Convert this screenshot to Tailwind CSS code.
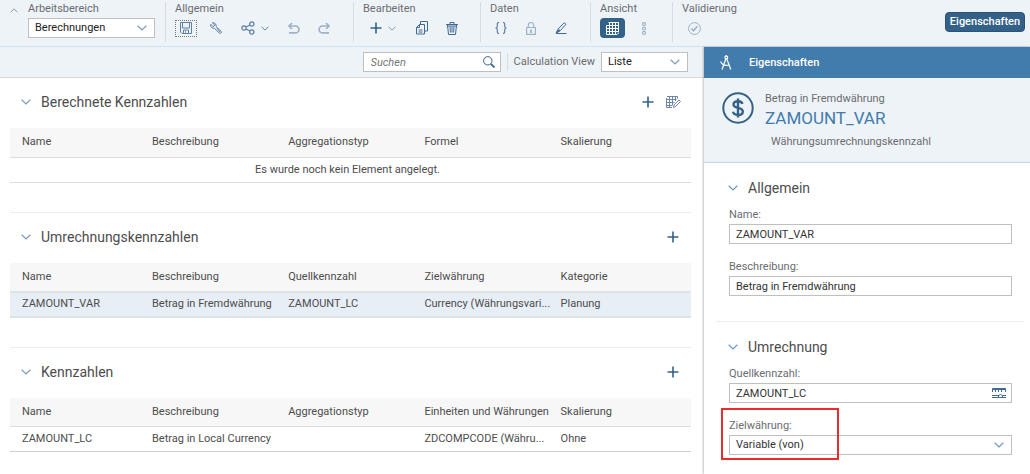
<!DOCTYPE html>
<html lang="de">
<head>
    <meta charset="UTF-8">
    <meta name="viewport" content="width=device-width, initial-scale=1.0">
    <title>Calculation View - Eigenschaften</title>
    <script src="https://cdn.jsdelivr.net/npm/@tailwindcss/browser@4"></script>
</head>
<body class="min-h-screen flex flex-col bg-white font-['Roboto',sans-serif] text-[11px] leading-4 text-[#4d4d4d]">

    <!-- Icons -->
    <svg class="hidden">
        <symbol id="chevron" viewBox="0 0 10 6"><path d="M.7.8 5 5 9.3.8" fill="none" stroke="currentColor" stroke-width="1.2"/></symbol>
        <symbol id="plus" viewBox="0 0 12 12"><path d="M6 .5v11M.5 6h11" fill="none" stroke="currentColor" stroke-width="1.6"/></symbol>
    </svg>

    <!-- Werkzeugleiste -->
    <header class="flex h-[47px] bg-[#eef3f8] border-b border-[#cfe0ee] text-[#6a6d70]">
        <button class="w-7 h-5 flex items-center justify-center text-[#7f9bb5]" aria-label="Einklappen">
            <svg class="w-2 h-[5px] rotate-180"><use href="#chevron"/></svg>
        </button>

        <div class="mt-0.5 h-10 pr-[10px] border-r border-[#d5dce2]">
            <label for="workspace" class="block h-4 leading-[14px]">Arbeitsbereich</label>
            <div class="relative">
                <select id="workspace" class="appearance-none block w-[127px] h-5 pl-1.5 bg-white border border-[#bfbfbf] text-[#222]">
                    <option>Berechnungen</option>
                </select>
                <svg class="absolute right-2 top-[7px] w-[10px] h-1.5 text-[#7f9bb5] pointer-events-none"><use href="#chevron"/></svg>
            </div>
        </div>

        <div class="mt-0.5 h-10 pl-[9px] pr-[18px] border-r border-[#d5dce2]">
            <div class="h-4 leading-[14px]">Allgemein</div>
            <div class="flex items-center gap-2 h-5 text-[#5f7fa3]">
                <button class="w-[22px] h-[17px] flex items-center justify-center border border-dotted border-[#777]" aria-label="Sichern">
                    <svg class="w-3 h-3" viewBox="0 0 12 12" fill="none" stroke="currentColor"><path d="M.5.5h11v11H2L.5 10zM2.5.5v5.5h7V.5M3.500 11.500V8h5v3.500M5.500 9.200v1.500"/></svg>
                </button>
                <button class="w-[22px] h-5 flex items-center justify-center" aria-label="Einstellungen">
                    <svg class="w-3 h-3" viewBox="0 0 12 12" fill="none" stroke="currentColor"><path d="M2.300.8 4.800 3 3.300 4.800.8 2.300C.2 4 1 5.800 3 6.200c.6.100 1 0 1.300-.1l5 5c1.300.9 2.600-.5 1.800-1.700L6 4.400c.5-1.900-.6-3.900-3.700-3.600zM6.800 6l3.300 4"/></svg>
                </button>
                <button class="w-10 h-5 flex items-center justify-center gap-1.5" aria-label="Teilen">
                    <svg class="w-[14px] h-[14px]" viewBox="0 0 14 14" fill="none" stroke="currentColor" stroke-width="1.200"><circle cx="3" cy="7" r="2.100"/><circle cx="10.800" cy="3" r="2.100"/><circle cx="10.800" cy="11" r="2.100"/><path d="m5 6 4-2M5 8l4 2"/></svg>
                    <svg class="w-2 h-[5px]"><use href="#chevron"/></svg>
                </button>
                <button class="w-[22px] h-5 flex items-center justify-center text-[#9db3c8]" aria-label="Rückgängig">
                    <svg class="w-3 h-3" viewBox="0 0 12 12" fill="none" stroke="currentColor" stroke-width="1.700"><path d="M4 1 1 4l3 3M1 4h6.500a3.300 3.300 0 0 1 0 6.800H1"/></svg>
                </button>
                <button class="w-[22px] h-5 flex items-center justify-center text-[#9db3c8]" aria-label="Wiederholen">
                    <svg class="w-3 h-3" viewBox="0 0 12 12" fill="none" stroke="currentColor" stroke-width="1.700"><path d="m8 1 3 3-3 3M11 4H4.500a3.300 3.300 0 0 0 0 6.800H11"/></svg>
                </button>
            </div>
        </div>

        <div class="mt-0.5 h-10 pl-[9px] pr-[17px] border-r border-[#d5dce2]">
            <div class="h-4 leading-[14px]">Bearbeiten</div>
            <div class="flex items-center gap-2 h-5 text-[#426b93]">
                <button class="w-10 h-5 flex items-center justify-center gap-1.5" aria-label="Hinzufügen">
                    <svg class="w-3 h-3 text-[#346187]"><use href="#plus"/></svg>
                    <svg class="w-2 h-[5px] text-[#7f9bb5]"><use href="#chevron"/></svg>
                </button>
                <button class="w-[22px] h-5 flex items-center justify-center" aria-label="Kopieren">
                    <svg class="w-3 h-[14px]" viewBox="0 0 12 14" fill="none" stroke="currentColor"><path d="M4.500 3.500V.5h7v9.500H9M.5 6.500l3-3H8.500v9.500h-8zM.5 6.500h3v-3M2.500 9h4M2.500 11h4"/></svg>
                </button>
                <button class="w-[22px] h-5 flex items-center justify-center" aria-label="Löschen">
                    <svg class="w-3 h-[13px]" viewBox="0 0 12 13" fill="none" stroke="currentColor"><path d="M0 2.500h12M4 2.500v-2h4v2M1.500 3l1 9.500h7l1-9.500M4 4.500l.4 6M6 4.500v6M8 4.500l-.4 6M1 4h10"/></svg>
                </button>
            </div>
        </div>

        <div class="mt-0.5 h-10 pl-[9px] pr-[18px] border-r border-[#d5dce2]">
            <div class="h-4 leading-[14px]">Daten</div>
            <div class="flex items-center gap-2 h-5 text-[#5f7fa3]">
                <button class="w-[22px] h-5 flex items-center justify-center" aria-label="Skript">
                    <svg class="w-3 h-3" viewBox="0 0 12 12" fill="none" stroke="currentColor" stroke-width="1.200"><path d="M4 .5C2.500.5 2.300 1 2.300 2.200v2C2.300 5.400 1.800 6 .5 6c1.300 0 1.800.6 1.800 1.800v2c0 1.200.2 1.700 1.700 1.700M8 .5c1.500 0 1.700.5 1.700 1.700v2c0 1.200.5 1.800 1.800 1.800-1.300 0-1.800.6-1.800 1.800v2c0 1.200-.2 1.700-1.700 1.700"/></svg>
                </button>
                <button class="w-[22px] h-5 flex items-center justify-center text-[#9db3c8]" aria-label="Sperren">
                    <svg class="w-[10px] h-[13px]" viewBox="0 0 10 13" fill="none" stroke="currentColor" stroke-width="1.200"><path d="M.6 5.500h8.800v6.900H.6zM2.300 5.500V3.200a2.700 2.700 0 0 1 5.400 0v2.300"/><path d="M5 7.500v3.500" stroke-width="1.800"/></svg>
                </button>
                <button class="w-[22px] h-5 flex items-center justify-center text-[#426b93]" aria-label="Bearbeiten">
                    <svg class="w-3 h-3" viewBox="0 0 12 12" fill="none" stroke="currentColor"><path d="m3.300 6.800 5.900-6L11 2.300 5.200 8.700zM3.200 7 1 11.200l4-2.400M1 11.500h10.500"/><path d="m1.500 10.500 2-2.500 1 1z" fill="currentColor"/></svg>
                </button>
            </div>
        </div>

        <div class="mt-0.5 h-10 pl-[9px] pr-[17px] border-r border-[#d5dce2]">
            <div class="h-4 leading-[14px]">Ansicht</div>
            <div class="flex items-center gap-2 h-5 text-[#9db3c8]">
                <button class="w-[25px] h-5 flex items-center justify-center rounded-sm bg-[#346187] text-white" aria-label="Listenansicht">
                    <svg class="w-[13px] h-[13px]" viewBox="0 0 13 13" fill="none" stroke="currentColor"><path d="M2.500.5h10v9M3.500.5v12M6.500.5v12M9.500.5v12M12.500.5v10M.5 3.500h12M.5 6.500h12M.5 9.500h12M.5 3.500v9h10.500l1.500-1.500"/></svg>
                </button>
                <button class="w-[22px] h-5 flex items-center justify-center" aria-label="Hierarchie">
                    <svg class="w-[6px] h-[13px]" viewBox="0 0 6 13" fill="none" stroke="currentColor" stroke-width="1.200"><circle cx="3" cy="2.100" r="1.500"/><circle cx="3" cy="6.500" r="1.500"/><circle cx="3" cy="10.900" r="1.500"/></svg>
                </button>
            </div>
        </div>

        <div class="mt-0.5 h-10 pl-[9px]">
            <div class="h-4 leading-[14px]">Validierung</div>
            <button class="w-6 h-5 flex items-center justify-center text-[#9db3c8]" aria-label="Validieren">
                <svg class="w-[13px] h-[13px]" viewBox="0 0 13 13" fill="none" stroke="currentColor"><circle cx="6.500" cy="6.500" r="5.900"/><path d="m3.500 6.700 2 2 3.800-4.400" stroke-width="1.700"/></svg>
            </button>
        </div>

        <button class="ml-auto mr-[5px] mt-3 w-20 h-5 rounded-sm bg-[#346187] border border-[#2b5277] text-white font-medium">Eigenschaften</button>
    </header>

    <div class="flex flex-1">

        <!-- Linker Bereich: Listen -->
        <main class="flex-1 min-w-0">
            <div class="flex items-center justify-end h-[31px] pr-4 bg-[#eef3f8] border-b border-[#d9d9d9] text-[#6a6d70]">
                <div class="relative">
                    <input type="search" placeholder="Suchen" aria-label="Suchen" class="block w-[138px] h-5 px-[7px] bg-white border border-[#bfbfbf] placeholder:italic placeholder:text-[#74777a]">
                    <svg class="absolute right-1.5 top-1 w-3 h-3 text-[#346187]" viewBox="0 0 12 12" fill="none" stroke="currentColor"><circle cx="4.800" cy="4.800" r="4.200"/><path d="m7.800 7.800 3.700 3.700" stroke-width="1.700"/></svg>
                </div>
                <div class="mx-1.5 h-[18px] border-l border-[#d5dce2]"></div>
                <label for="view" class="mr-1.5 leading-[18px]">Calculation View</label>
                <div class="relative">
                    <select id="view" class="appearance-none block w-[87px] h-5 pl-1.5 bg-white border border-[#bfbfbf] text-[#222]">
                        <option>Liste</option>
                    </select>
                    <svg class="absolute right-2 top-[7px] w-[10px] h-1.5 text-[#7f9bb5] pointer-events-none"><use href="#chevron"/></svg>
                </div>
            </div>

            <div class="pl-[10px] pr-[13px]">
                <!-- Berechnete Kennzahlen -->
                <section class="pb-[29px]">
                    <div class="flex items-center h-[50px] pl-[11px] pr-3 pb-0.5">
                        <svg class="w-[10px] h-1.5 text-[#7f9bb5]"><use href="#chevron"/></svg>
                        <h2 class="ml-[10px] text-[14px] leading-5">Berechnete Kennzahlen</h2>
                        <button class="ml-auto text-[#346187]" aria-label="Kennzahl anlegen"><svg class="w-3 h-3"><use href="#plus"/></svg></button>
                        <button class="ml-3 -mr-0.5 text-[#6f87a6]" aria-label="Tabelle bearbeiten">
                            <svg class="w-[15px] h-3" viewBox="0 0 15 12" fill="none" stroke="currentColor"><path d="M.5 2v9.500h5.500M.5 3.500h10M3.500 0v11.500M6.500 0v9M9.500 0v5M1 .5h10.500v2M.5 6.500h8M.5 9.500h6"/><path d="m7.500 11.500.5-2.500 5-5 1.500 1.500-5 5z"/></svg>
                        </button>
                    </div>
                    <table class="w-full table-fixed text-left">
                        <thead>
                            <tr class="h-[29px] bg-[#f7f7f7] border-b border-[#dcdcdc]">
                                <th class="w-[130px] pl-3 font-normal">Name</th>
                                <th class="w-[20%] pl-3 font-normal">Beschreibung</th>
                                <th class="w-[20%] pl-3 font-normal">Aggregationstyp</th>
                                <th class="w-[20%] pl-3 font-normal">Formel</th>
                                <th class="pl-3 font-normal">Skalierung</th>
                            </tr>
                        </thead>
                        <tbody>
                            <tr class="h-[25px] border-b border-[#dcdcdc]">
                                <td colspan="5" class="pr-1.5 text-center">Es wurde noch kein Element angelegt.</td>
                            </tr>
                        </tbody>
                    </table>
                </section>

                <!-- Umrechnungskennzahlen -->
                <section class="pb-[29px] border-t border-[#eeeeee]">
                    <div class="flex items-center h-[50px] pl-[11px] pr-3 pb-0.5">
                        <svg class="w-[10px] h-1.5 text-[#7f9bb5]"><use href="#chevron"/></svg>
                        <h2 class="ml-[10px] text-[14px] leading-5">Umrechnungskennzahlen</h2>
                        <button class="ml-auto text-[#346187]" aria-label="Umrechnungskennzahl anlegen"><svg class="w-3 h-3"><use href="#plus"/></svg></button>
                    </div>
                    <table class="w-full table-fixed text-left">
                        <thead>
                            <tr class="h-[29px] bg-[#f7f7f7] border-b-2 border-[#e0e4e7]">
                                <th class="w-[130px] pl-3 font-normal">Name</th>
                                <th class="w-[20%] pl-3 font-normal">Beschreibung</th>
                                <th class="w-[20%] pl-3 font-normal">Quellkennzahl</th>
                                <th class="w-[20%] pl-3 font-normal">Zielwährung</th>
                                <th class="pl-3 font-normal">Kategorie</th>
                            </tr>
                        </thead>
                        <tbody>
                            <tr class="h-[25px] bg-[#e7eef6] border-b-2 border-[#dde2e6]">
                                <td class="pl-3 whitespace-nowrap">ZAMOUNT_VAR</td>
                                <td class="pl-3 whitespace-nowrap">Betrag in Fremdwährung</td>
                                <td class="pl-3 whitespace-nowrap">ZAMOUNT_LC</td>
                                <td class="pl-3 whitespace-nowrap">Currency (Währungsvari...</td>
                                <td class="pl-3 whitespace-nowrap">Planung</td>
                            </tr>
                        </tbody>
                    </table>
                </section>

                <!-- Kennzahlen -->
                <section class="border-t border-[#eeeeee]">
                    <div class="flex items-center h-[50px] pl-[11px] pr-3 pb-0.5">
                        <svg class="w-[10px] h-1.5 text-[#7f9bb5]"><use href="#chevron"/></svg>
                        <h2 class="ml-[10px] text-[14px] leading-5">Kennzahlen</h2>
                        <button class="ml-auto text-[#346187]" aria-label="Kennzahl anlegen"><svg class="w-3 h-3"><use href="#plus"/></svg></button>
                    </div>
                    <table class="w-full table-fixed text-left">
                        <thead>
                            <tr class="h-[29px] bg-[#f7f7f7] border-b border-[#dcdcdc]">
                                <th class="w-[130px] pl-3 font-normal">Name</th>
                                <th class="w-[20%] pl-3 font-normal">Beschreibung</th>
                                <th class="w-[20%] pl-3 font-normal">Aggregationstyp</th>
                                <th class="w-[20%] pl-3 font-normal whitespace-nowrap">Einheiten und Währungen</th>
                                <th class="pl-3 font-normal">Skalierung</th>
                            </tr>
                        </thead>
                        <tbody>
                            <tr class="h-[25px] border-b border-[#cfcfcf]">
                                <td class="pl-3 whitespace-nowrap">ZAMOUNT_LC</td>
                                <td class="pl-3 whitespace-nowrap">Betrag in Local Currency</td>
                                <td class="pl-3"></td>
                                <td class="pl-3 whitespace-nowrap">ZDCOMPCODE (Währu...</td>
                                <td class="pl-3 whitespace-nowrap">Ohne</td>
                            </tr>
                        </tbody>
                    </table>
                </section>
            </div>
        </main>

        <!-- Rechter Bereich: Eigenschaften -->
        <aside class="w-[326px] shrink-0 shadow-[-1px_0_2px_rgba(0,0,0,0.25)]">
            <div class="flex items-center h-[31px] pl-4 bg-[#427cac] text-white">
                <svg class="w-3 h-[15px]" viewBox="0 0 12 15" fill="none" stroke="currentColor" stroke-width="1.200"><circle cx="6.300" cy="2.500" r="1.400"/><path d="M6.300 0v1M5.800 4 2 14.500M6.800 4l4 10.500M.5 6.500c1.500 3.500 5 4.500 9 3.500"/></svg>
                <h1 class="ml-[17px] font-medium">Eigenschaften</h1>
            </div>

            <div class="flex h-[85px] pl-[18px] pt-[13px] bg-[#eef3f8] border-b border-[#bcd6ec] text-[#6a6d70]">
                <svg class="w-8 h-8 mt-px text-[#346187]" viewBox="0 0 32 32" fill="none" stroke="currentColor" stroke-width="2"><circle cx="16" cy="16" r="14.700"/><path d="M20.500 11.800c-.6-1.700-2.200-2.600-4.500-2.600-2.700 0-4.500 1.200-4.500 3.300 0 4.700 9.300 2 9.300 6.900 0 2.200-1.900 3.500-4.700 3.500-2.700 0-4.600-1.100-5.100-3.100M16 6.500v19" stroke-width="2.400"/></svg>
                <div class="ml-[11px]">
                    <div>Betrag in Fremdwährung</div>
                    <div class="mt-px text-[17px] leading-5 text-[#427cac]">ZAMOUNT_VAR</div>
                    <div class="mt-1.5 ml-1.5">Währungsumrechnungskennzahl</div>
                </div>
            </div>

            <div class="pl-3 pr-1.5">
                <section class="pt-[15px] pb-[25px] px-3">
                    <div class="flex items-center h-5">
                        <svg class="w-[10px] h-1.5 text-[#6b97c0]"><use href="#chevron"/></svg>
                        <h2 class="ml-[10px] text-[14px] leading-5">Allgemein</h2>
                    </div>
                    <div class="pl-px">
                        <label for="name" class="block mt-[9px] mb-px text-[#6a6d70]">Name:</label>
                        <input id="name" type="text" value="ZAMOUNT_VAR" class="block w-full h-5 px-1.5 border border-[#bfbfbf] text-[#333]">
                        <label for="description" class="block mt-[15px] mb-px text-[#6a6d70]">Beschreibung:</label>
                        <input id="description" type="text" value="Betrag in Fremdwährung" class="block w-full h-5 px-1.5 border border-[#bfbfbf] text-[#333]">
                    </div>
                </section>

                <section class="pt-[15px] px-3 border-t border-[#eeeeee]">
                    <div class="flex items-center h-5">
                        <svg class="w-[10px] h-1.5 text-[#6b97c0]"><use href="#chevron"/></svg>
                        <h2 class="ml-[10px] text-[14px] leading-5">Umrechnung</h2>
                    </div>
                    <div class="pl-px">
                        <label for="source" class="block mt-[9px] mb-px text-[#6a6d70]">Quellkennzahl:</label>
                        <div class="relative">
                            <input id="source" type="text" value="ZAMOUNT_LC" class="block w-full h-5 px-1.5 border border-[#bfbfbf] text-[#333]">
                            <svg class="absolute right-1.5 top-[5px] w-[14px] h-[10px] text-[#426b93]" viewBox="0 0 14 10" fill="none" stroke="currentColor"><path d="M.5 4V.5h13V4M0 1.500h14M3.500 2v2M6.500 2v2M9.500 2v2M0 7.500h7M10.500 7.500H14M0 9.500h14"/><path d="M6.500 9.500V8l2-2 2 2v1.500"/></svg>
                        </div>
                        <div class="relative mt-[15px]">
                            <label for="target" class="block mb-px text-[#6a6d70]">Zielwährung:</label>
                            <div class="relative">
                                <select id="target" class="appearance-none block w-full h-5 pl-1.5 bg-white border border-[#bfbfbf] text-[#333]">
                                    <option>Variable (von)</option>
                                </select>
                                <svg class="absolute right-2 top-[7px] w-[10px] h-1.5 text-[#6b97c0] pointer-events-none"><use href="#chevron"/></svg>
                            </div>
                            <!-- Hervorhebung -->
                            <div class="absolute -left-2 -top-[10px] w-[118px] h-[52px] border-2 border-[#ee2b2b] pointer-events-none"></div>
                        </div>
                    </div>
                </section>
            </div>
        </aside>
    </div>

</body>
</html>
